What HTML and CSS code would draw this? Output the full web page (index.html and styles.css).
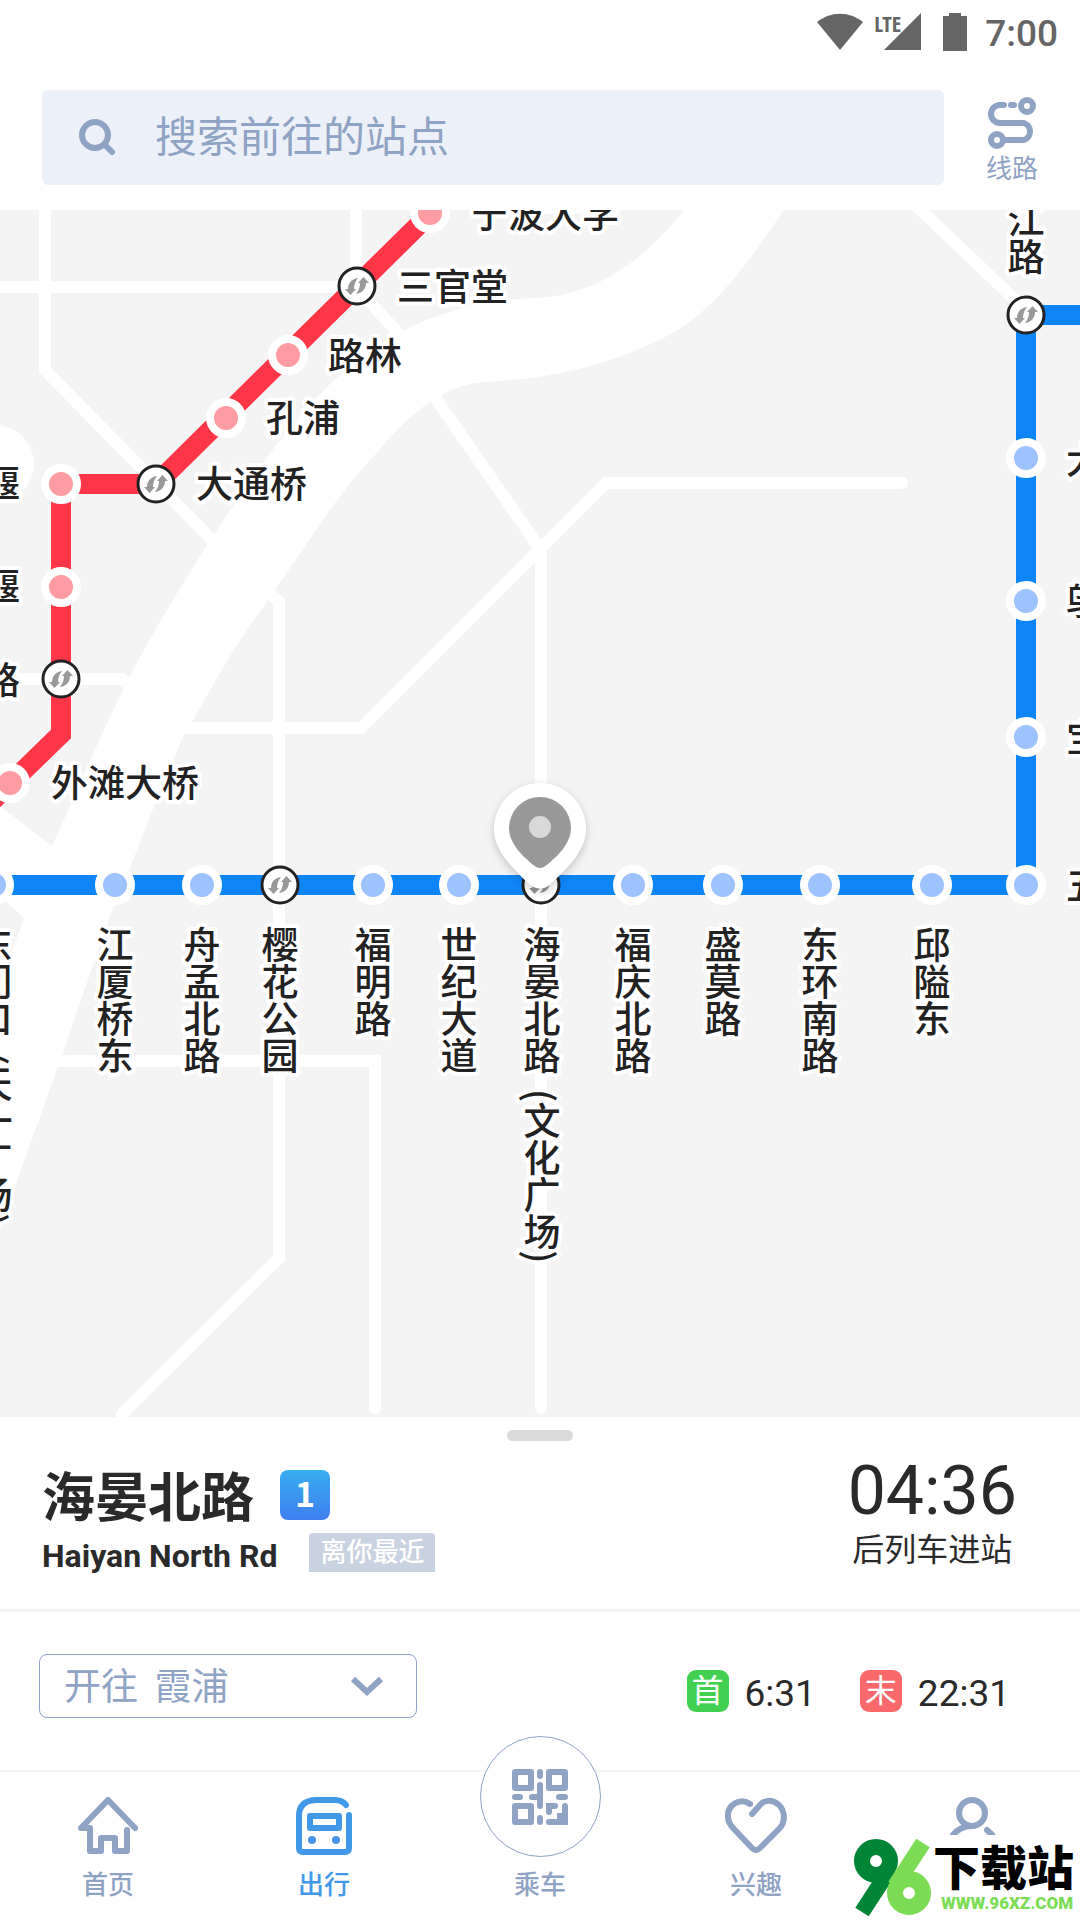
FILE: index.html
```html
<!DOCTYPE html>
<html lang="zh-CN">
<head>
<meta charset="utf-8">
<meta name="viewport" content="width=device-width, initial-scale=1">
<title>出行</title>
<link rel="stylesheet" href="styles.css">
</head>
<body>
<div class="app">
  <div class="status">
    <svg class="status-wifi" viewBox="0 0 46 38" aria-hidden="true"><path d="M0 9C14-2 32-2 46 9L23 37Z"/></svg>
    <span class="status-signal">
      <svg class="status-bars" viewBox="0 0 37 38" aria-hidden="true"><path d="M37 0V37H0Z"/></svg>
      <span class="status-lte">LTE</span>
    </span>
    <svg class="status-battery" viewBox="0 0 24 38" aria-hidden="true"><path d="M6 0H18V3H24V38H0V3H6Z"/></svg>
    <span class="status-time">7:00</span>
  </div>

  <header class="topbar">
    <label class="search">
      <svg class="search-icon" viewBox="0 0 38 38" aria-hidden="true"><circle cx="17" cy="17" r="13"/><path d="M27 27L34 34"/></svg>
      <input class="search-input" type="text" placeholder="搜索前往的站点" aria-label="搜索前往的站点">
    </label>
    <a class="routes" href="#routes">
      <svg class="routes-icon" viewBox="0 0 48 54" aria-hidden="true">
        <circle cx="39" cy="10" r="6"/><circle cx="9" cy="44" r="6"/>
        <path d="M16 9H12A9 9 0 0 0 12 27H36A9 9 0 0 1 36 44H16M23 9H26"/>
      </svg>
      <span>线路</span>
    </a>
  </header>

  <main class="map">
    <svg class="map-canvas" viewBox="0 210 1080 1207" preserveAspectRatio="xMidYMid slice" role="img" aria-label="线路图">
      <defs>
        <g id="transfer">
          <circle class="ring" r="18"/>
          <path class="arrow" d="M-12 3H-9C-9-2-6-7 1-8C-2-4-3-1-3 3H-1L-6.500 9Z"/>
          <path class="arrow" d="M-12 3H-9C-9-2-6-7 1-8C-2-4-3-1-3 3H-1L-6.500 9Z" transform="rotate(180)"/>
        </g>
      </defs>

      <g class="water">
        <path d="M684 210C640 266 590 296 536 298C440 302 376 336 318 396C270 448 238 498 207 545C180 589 150 635 124 688C100 736 78 790 52 846L0 806V896L24 918L0 984V1230L17 1181L62 1055L110 916L131 865L155 804L182 739C198 712 212 686 227 661C242 636 256 618 272 594C306 546 340 490 375 455C412 410 446 384 486 382C550 378 606 368 671 334C720 306 752 256 784 210Z"/>
        <circle cx="-5" cy="464" r="39"/>
      </g>
      <g class="roads">
        <path d="M0 287H356M45 200V370L216 544M356 200V287L400 335M434 396L541 550V1408M180 728H361L606 483H902M269 592L279 602V1258L122 1414M0 679H122L136 692M40 1061H375V1408M910 200L1026 310"/>
      </g>

      <g class="line line-red"><path d="M440 204L156 484H61V734L-12 805"/></g>
      <g class="line line-blue"><path d="M-10 885H1026V315H1090"/></g>

      <g class="stop stop-red">
        <circle cx="430" cy="213" r="16"/><circle cx="288" cy="355" r="16"/><circle cx="226" cy="418" r="16"/>
        <circle cx="61" cy="484" r="16"/><circle cx="61" cy="587" r="16"/><circle cx="10" cy="783" r="16"/>
      </g>
      <g class="stop stop-blue">
        <circle cx="-6" cy="885" r="16"/><circle cx="115" cy="885" r="16"/><circle cx="202" cy="885" r="16"/>
        <circle cx="373" cy="885" r="16"/><circle cx="459" cy="885" r="16"/><circle cx="633" cy="885" r="16"/>
        <circle cx="723" cy="885" r="16"/><circle cx="820" cy="885" r="16"/><circle cx="932" cy="885" r="16"/>
        <circle cx="1026" cy="885" r="16"/><circle cx="1026" cy="737" r="16"/><circle cx="1026" cy="601" r="16"/>
        <circle cx="1026" cy="458" r="16"/>
      </g>
      <use href="#transfer" x="357" y="286"/><use href="#transfer" x="156" y="484"/>
      <use href="#transfer" x="61" y="679"/><use href="#transfer" x="280" y="885"/>
      <use href="#transfer" x="541" y="885"/><use href="#transfer" x="1026" y="315"/>

      <g class="name">
        <text x="471" y="228">宁波大学</text>
        <text x="397" y="301">三官堂</text>
        <text x="328" y="370">路林</text>
        <text x="266" y="432">孔浦</text>
        <text x="196" y="498">大通桥</text>
        <text x="51" y="797">外滩大桥</text>
        <text x="1066" y="474">大碶</text>
        <text x="1066" y="616">邬隘</text>
        <text x="1066" y="752">宝幢</text>
        <text x="1066" y="900">五乡</text>
      </g>
      <g class="name name-end">
        <text x="20" y="498">压赛堰</text>
        <text x="20" y="601">倪家堰</text>
        <text x="20" y="694">正大路</text>
      </g>
      <g class="name name-down">
        <text x="-6" y="926">东门口<tspan dy="15">(天一广场)</tspan></text>
        <text x="115" y="926">江厦桥东</text>
        <text x="202" y="926">舟孟北路</text>
        <text x="280" y="926">樱花公园</text>
        <text x="373" y="926">福明路</text>
        <text x="459" y="926">世纪大道</text>
        <text x="542" y="926">海晏北路<tspan dy="15">(文化广场)</tspan></text>
        <text x="633" y="926">福庆北路</text>
        <text x="723" y="926">盛莫路</text>
        <text x="820" y="926">东环南路</text>
        <text x="932" y="926">邱隘东</text>
      </g>
      <g class="name name-down name-end"><text x="1026" y="275">松花江路</text></g>

      <g class="pin">
        <path class="pin-body" d="M540 783A46 46 0 0 1 586 829C586 851 568 867 551 884Q540 893 529 884C512 867 494 851 494 829A46 46 0 0 1 540 783Z"/>
        <path class="pin-core" d="M540 797A31 31 0 0 1 571 828C571 844 556 858 544 867Q540 869 536 867C524 858 509 844 509 828A31 31 0 0 1 540 797Z"/>
        <circle class="pin-dot" cx="540" cy="827" r="11"/>
      </g>
    </svg>
  </main>

  <section class="sheet">
    <div class="handle"></div>
    <div class="station">
      <div class="station-info">
        <div class="station-row">
          <h1 class="station-title">海晏北路</h1>
          <span class="line-badge">1</span>
        </div>
        <div class="station-row station-sub">
          <span class="station-en">Haiyan North Rd</span>
          <span class="tag">离你最近</span>
        </div>
      </div>
      <div class="next">
        <span class="next-time">04:36</span>
        <span class="next-label">后列车进站</span>
      </div>
    </div>
    <div class="direction">
      <div class="select-wrap">
        <select class="select" aria-label="开往方向"><option>开往&nbsp;&nbsp;霞浦</option></select>
        <svg class="select-arrow" viewBox="0 0 34 22" aria-hidden="true"><path d="M3 3L17 16L31 3"/></svg>
      </div>
      <div class="trains">
        <span class="train-mark train-first">首</span><span class="train-time">6:31</span>
        <span class="train-mark train-last">末</span><span class="train-time">22:31</span>
      </div>
    </div>
  </section>

  <nav class="tabs">
    <a class="tab" href="#home">
      <svg class="tab-icon" viewBox="0 0 60 58" aria-hidden="true"><path d="M49 33V54H37V41H23V54H12V31H3L30 3L57 31"/></svg>
      <span>首页</span>
    </a>
    <a class="tab tab-active" href="#travel" aria-current="page">
      <svg class="tab-icon" viewBox="0 0 60 58" aria-hidden="true"><path d="M52 8C49 4 45 3 41 3H21Q5 4 5 19V51Q5 55 9 55H51Q55 55 55 51V18M16 19H45V31H16Z"/><circle class="solid" cx="18" cy="43" r="4"/><circle class="solid" cx="42" cy="43" r="4"/></svg>
      <span>出行</span>
    </a>
    <a class="tab tab-ride" href="#ride">
      <span class="ride-circle">
        <svg class="ride-icon" viewBox="0 0 56 56" aria-hidden="true">
          <path class="finder" d="M3 3H19V19H3ZM37 3H53V19H37ZM3 37H19V53H3Z"/>
          <path class="bits" d="M28 3V7M28 16V37M20 28H28M3 28H8M47 28H53M28 49V53M37 43V37H43M37 53H53V37M48 47H52V51H48Z"/>
        </svg>
      </span>
      <span>乘车</span>
    </a>
    <a class="tab" href="#interest">
      <svg class="tab-icon tab-heart" viewBox="0 0 64 58" aria-hidden="true"><path d="M26 7C16 0 3 8 4 20C4 25 7 29 10 32L28 51Q32 55 36 51L55 32C62 25 61 14 55 8C48 2 40 3 36 8L28 17"/></svg>
      <span>兴趣</span>
    </a>
    <a class="tab" href="#mine" aria-label="我的">
      <svg class="tab-icon" viewBox="0 0 60 58" aria-hidden="true"><circle cx="30" cy="16" r="13"/><path d="M4 54C6 42 14 30 28 29M45 33C52 38 55 46 56 54"/></svg>
    </a>
    <div class="mark">
      <svg class="mark-logo" viewBox="0 0 78 80" aria-hidden="true">
        <g class="mark-dark"><circle cx="23" cy="24" r="14"/><path d="M37 32L9 75"/></g>
        <g class="mark-light"><circle cx="56" cy="56" r="14"/><path d="M70 6L42 49"/></g>
      </svg>
      <div class="mark-text">
        <span class="mark-name">下载站</span>
        <span class="mark-url">WWW.96XZ.COM</span>
      </div>
    </div>
  </nav>
</div>
</body>
</html>
```
FILE: styles.css
```css
* { box-sizing: border-box; }

:root {
  --muted: #8fa3c4;
  --ink: #2a2a2a;
  --active: #4298e8;
}

body {
  margin: 0;
  background: #fff;
  color: var(--ink);
  font-family: Roboto, "Noto Sans CJK SC", sans-serif;
}

a { color: inherit; text-decoration: none; }
svg { display: block; }

.app {
  display: flex;
  flex-direction: column;
  min-height: 100vh;
}

/* Status bar */
.status {
  display: flex;
  justify-content: flex-end;
  align-items: center;
  height: 64px;
  padding: 0 22px 0 0;
  color: #656565;
}
.status svg { fill: currentColor; }
.status-wifi { width: 46px; height: 38px; }
.status-signal { position: relative; margin-left: 21px; }
.status-bars { width: 37px; height: 38px; }
.status-lte {
  position: absolute;
  top: 0;
  left: -10px;
  font: bold 22px/20px "Liberation Sans Narrow", "Open Sans Condensed", Roboto, sans-serif;
}
.status-battery { width: 24px; height: 38px; margin-left: 22px; }
.status-time {
  padding-top: 4px;
  margin-left: 18px;
  font-size: 37px;
  font-weight: 500;
  line-height: 40px;
}

/* Search header */
.topbar {
  display: flex;
  align-items: center;
  height: 146px;
  padding: 0 42px;
}
.search {
  display: flex;
  flex: 1;
  align-items: center;
  gap: 39px;
  height: 95px;
  padding: 0 36px;
  border-radius: 6px;
  background: #ecf1f9;
}
.search-icon {
  width: 38px;
  height: 38px;
  fill: none;
  stroke: var(--muted);
  stroke-width: 6;
  stroke-linecap: round;
}
.search-input {
  flex: 1;
  min-width: 0;
  padding: 0 0 6px;
  border: 0;
  outline: 0;
  background: none;
  color: var(--ink);
  font: 42px/60px "Noto Sans CJK SC", sans-serif;
}
.search-input::placeholder { color: var(--muted); opacity: 1; }
.routes {
  display: flex;
  flex-direction: column;
  align-items: center;
  gap: 2px;
  padding-top: 8px;
  margin-left: 42px;
  color: var(--muted);
  font-size: 26px;
  line-height: 34px;
}
.routes-icon {
  width: 48px;
  height: 54px;
  fill: none;
  stroke: currentColor;
  stroke-width: 6;
  stroke-linecap: round;
}

/* Route map */
.map {
  position: relative;
  flex: 1 1 1207px;
  background: #f4f4f4;
  overflow: hidden;
}
.map-canvas { position: absolute; width: 100%; height: 100%; }
.water { fill: #fff; }
.roads { fill: none; stroke: #fff; stroke-width: 12; stroke-linecap: round; }
.line { fill: none; stroke-width: 20; }
.line-red { stroke: #ff3648; }
.line-blue { stroke: #0e85f7; }
.stop { stroke: #fff; stroke-width: 8; }
.stop-red { fill: #ff9ba2; }
.stop-blue { fill: #9dc2fd; }
.ring { fill: #fff; stroke: #222; stroke-width: 3; }
.arrow { fill: #999; }
.name {
  fill: #222;
  stroke: #fff;
  stroke-width: 8;
  stroke-linejoin: round;
  paint-order: stroke;
  font: 500 37px "Noto Sans CJK SC", sans-serif;
}
.name-end { text-anchor: end; }
.name-down { writing-mode: vertical-rl; }
.pin-body { fill: #fff; filter: drop-shadow(0 3px 4px rgba(0, 0, 0, .2)); }
.pin-core { fill: #999; }
.pin-dot { fill: #d9d9d9; }

/* Station sheet */
.handle {
  width: 66px;
  height: 11px;
  margin: 13px auto 0;
  border-radius: 6px;
  background: #dadada;
}
.station {
  display: flex;
  justify-content: space-between;
  height: 171px;
  padding: 20px 63px 0 42px;
  border-bottom: 3px solid #f3f3f3;
}
.station-row { display: flex; align-items: center; }
.station-title {
  padding-top: 4px;
  margin: 0;
  font-size: 53px;
  line-height: 68px;
}
.line-badge {
  width: 50px;
  height: 50px;
  margin: 0 0 4px 26px;
  border-radius: 8px;
  background: linear-gradient(#38adf0, #407ff0);
  color: #fff;
  font: bold 34px/46px "Noto Sans CJK SC", sans-serif;
  text-align: center;
}
.station-sub { height: 39px; }
.station-en { padding-top: 6px; font-size: 32px; font-weight: 700; line-height: 38px; }
.tag {
  margin-left: 32px;
  padding: 0 11px;
  border-radius: 4px 4px 0 0;
  background: #c9d2e0;
  color: #fff;
  font-size: 26px;
  font-weight: 500;
  line-height: 39px;
}
.next {
  display: flex;
  flex-direction: column;
  align-items: center;
}
.next-time { font-size: 68px; line-height: 60px; }
.next-label { padding-top: 6px; font-size: 32px; line-height: 46px; }

.direction {
  display: flex;
  justify-content: space-between;
  align-items: center;
  height: 158px;
  padding: 0 70px 10px 39px;
}
.select-wrap { position: relative; width: 378px; }
.select {
  appearance: none;
  width: 100%;
  height: 64px;
  padding: 0 24px 4px;
  border: 1px solid var(--muted);
  border-radius: 8px;
  background: #fff;
  color: var(--muted);
  font: 37px/56px "Noto Sans CJK SC", sans-serif;
}
.select-arrow {
  position: absolute;
  top: 22px;
  right: 33px;
  width: 34px;
  height: 22px;
  fill: none;
  stroke: var(--muted);
  stroke-width: 6;
  pointer-events: none;
}
.trains { display: flex; align-items: center; padding-top: 10px; }
.train-mark {
  width: 42px;
  height: 42px;
  border-radius: 9px;
  color: #fff;
  font-size: 32px;
  line-height: 42px;
  text-align: center;
}
.train-first { background: #41d04f; }
.train-last { margin-left: 44px; background: #f9686b; }
.train-time { padding-top: 6px; margin-left: 16px; font-size: 37px; line-height: 42px; }

/* Bottom tabs */
.tabs {
  position: relative;
  display: grid;
  grid-template-columns: repeat(5, 1fr);
  height: 150px;
  border-top: 2px solid #f4f4f4;
}
.tab {
  display: flex;
  flex-direction: column;
  align-items: center;
  gap: 10px;
  padding-top: 25px;
  color: var(--muted);
  font-size: 26px;
  font-weight: 500;
  line-height: 40px;
}
.tab-active { color: var(--active); }
.tab-icon {
  width: 60px;
  height: 58px;
  fill: none;
  stroke: currentColor;
  stroke-width: 6;
  stroke-linecap: round;
  stroke-linejoin: round;
}
.tab-heart { width: 64px; }
.solid { fill: currentColor; stroke: none; }
.tab-ride { padding-top: 0; gap: 8px; }
.ride-circle {
  display: grid;
  place-items: center;
  width: 121px;
  height: 121px;
  margin-top: -36px;
  border: 1px solid var(--muted);
  border-radius: 50%;
  background: #fff;
}
.ride-icon { width: 56px; height: 56px; fill: none; stroke: currentColor; }
.finder { stroke-width: 6; stroke-linejoin: round; }
.bits { stroke-width: 6; stroke-linecap: round; }

/* Site mark over the last tab */
.mark {
  position: absolute;
  right: 0;
  bottom: 0;
  display: flex;
  gap: 2px;
  width: 228px;
  height: 85px;
  padding: 2px 0 0 1px;
  background: #fff;
}
.mark-logo { width: 78px; height: 80px; fill: none; stroke-width: 16; }
.mark-dark { stroke: #008537; }
.mark-light { stroke: #7ddc55; }
.mark-text { display: flex; flex-direction: column; }
.mark-name {
  color: #000;
  font: 900 47px/56px "Noto Sans CJK SC", sans-serif;
}
.mark-url {
  padding-left: 8px;
  color: #7ddc55;
  font: 900 17px/20px Roboto, sans-serif;
  white-space: nowrap;
}
```
